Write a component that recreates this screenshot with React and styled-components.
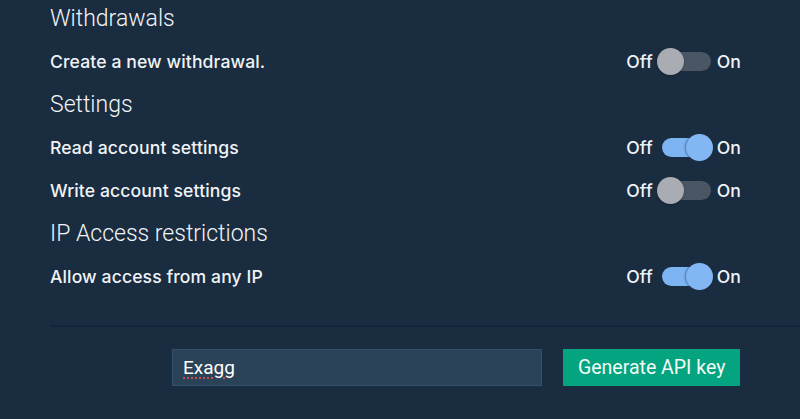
import React, { useState } from "react";
import styled, { createGlobalStyle } from "styled-components";

const Global = createGlobalStyle`
  html, body { margin: 0; padding: 0; background: #1a2c40; }
  body { width: 800px; height: 419px; overflow: hidden; }
  * { box-sizing: border-box; }
`;

const Page = styled.div`
  width: 800px;
  height: 419px;
  background: #1a2c40;
  color: #ffffff;
  display: flex;
  flex-direction: column;
  padding-left: 50px;
`;

const Content = styled.div`
  display: flex;
  flex-direction: column;
  padding-right: 59px;
  margin-top: -3px;
`;

const Heading = styled.div`
  font-family: Roboto, "Liberation Sans", sans-serif;
  font-weight: 300;
  font-size: 23px;
  height: 43px;
  line-height: 43px;
  color: #f2f4f6;
`;

const Row = styled.div`
  display: flex;
  align-items: center;
  justify-content: space-between;
  height: 43px;
`;

const Label = styled.span`
  font-family: Inter, "Liberation Sans", sans-serif;
  font-weight: 500;
  font-size: 17.6px;
  letter-spacing: 0.1px;
  color: #f0f3f6;
`;

const SwitchWrap = styled.div`
  display: flex;
  align-items: center;
  gap: 4px;
  font-family: Inter, "Liberation Sans", sans-serif;
  font-weight: 500;
  font-size: 17.6px;
  letter-spacing: 0.1px;
  color: #f0f3f6;
`;

const Track = styled.button`
  position: relative;
  width: 56px;
  height: 27px;
  padding: 0;
  border: none;
  background: transparent;
  cursor: pointer;
  &::before {
    content: "";
    position: absolute;
    left: 5px;
    right: 2px;
    top: 4px;
    height: 19px;
    border-radius: 10px;
    background: ${(p) => (p.$on ? "#7db4f2" : "#4a5663")};
  }
`;

const Thumb = styled.span`
  position: absolute;
  top: 0;
  left: ${(p) => (p.$on ? "29px" : "0px")};
  width: 27px;
  height: 27px;
  border-radius: 50%;
  background: ${(p) => (p.$on ? "#83b7f3" : "#a9adb3")};
  box-shadow: ${(p) =>
    p.$on ? "-1px 0 2px rgba(40,70,110,0.6)" : "0 1px 2px rgba(0,0,0,0.25)"};
`;

const Divider = styled.div`
  height: 2px;
  background: #14243a;
  margin-top: 27px;
`;

const Form = styled.div`
  display: flex;
  align-items: center;
  gap: 21px;
  padding-left: 122px;
  padding-right: 60px;
  margin-top: 22px;
`;

const Input = styled.input`
  width: 371px;
  height: 37px;
  background: #2a4359;
  border: 1px solid #37506a;
  color: #ffffff;
  font-family: Roboto, "Liberation Sans", sans-serif;
  font-weight: 400;
  font-size: 19px;
  padding: 0 10px;
  outline: none;
  text-decoration: underline dotted #d05050;
  text-underline-offset: 4px;
`;

const Button = styled.button`
  width: 177px;
  height: 37px;
  background: #03a47f;
  border: none;
  color: #f3fbf8;
  font-family: Roboto, "Liberation Sans", sans-serif;
  font-weight: 400;
  font-size: 19.5px;
  cursor: pointer;
  padding: 0;
`;

function Toggle({ initial }) {
  const [on, setOn] = useState(initial);
  return (
    <SwitchWrap>
      <span>Off</span>
      <Track $on={on} onClick={() => setOn(!on)}>
        <Thumb $on={on} />
      </Track>
      <span>On</span>
    </SwitchWrap>
  );
}

const sections = [
  { title: "Withdrawals", rows: [{ label: "Create a new withdrawal.", on: false }] },
  {
    title: "Settings",
    rows: [
      { label: "Read account settings", on: true },
      { label: "Write account settings", on: false },
    ],
  },
  { title: "IP Access restrictions", rows: [{ label: "Allow access from any IP", on: true }] },
];

export default function App() {
  return (
    <>
      <Global />
      <Page>
        <Content>
          {sections.map((s) => (
            <React.Fragment key={s.title}>
              <Heading>{s.title}</Heading>
              {s.rows.map((r) => (
                <Row key={r.label}>
                  <Label>{r.label}</Label>
                  <Toggle initial={r.on} />
                </Row>
              ))}
            </React.Fragment>
          ))}
        </Content>
        <Divider />
        <Form>
          <Input defaultValue="Exagg" spellCheck={false} />
          <Button>Generate API key</Button>
        </Form>
      </Page>
    </>
  );
}
